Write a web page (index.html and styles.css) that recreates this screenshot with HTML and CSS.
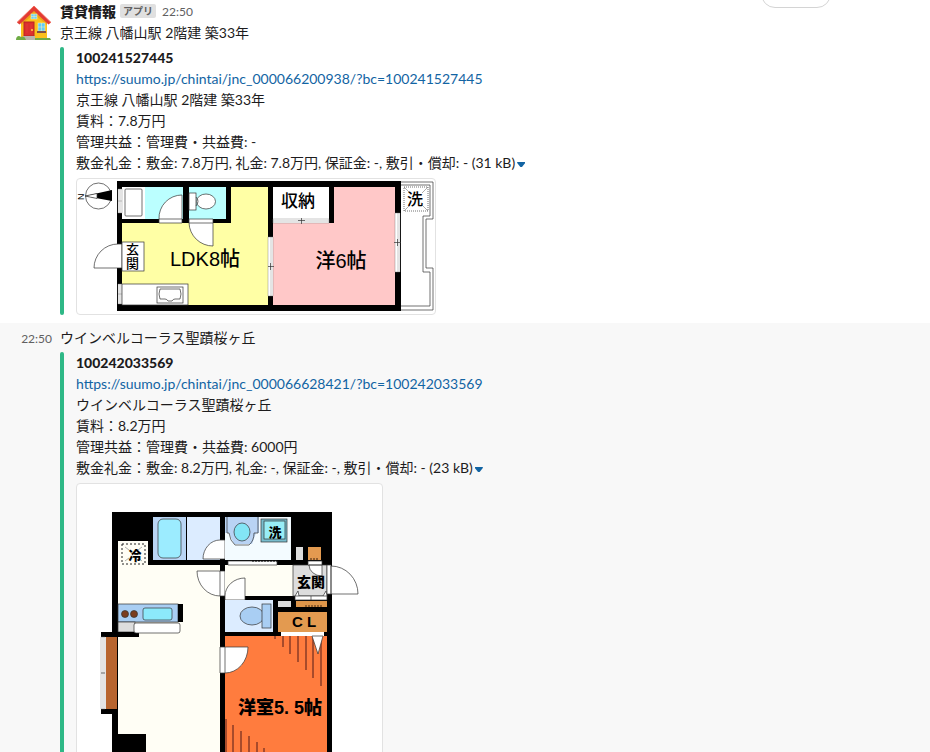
FILE: index.html
```html
<!DOCTYPE html>
<html lang="ja">
<head>
<meta charset="utf-8">
<title>賃貸情報</title>
<link rel="stylesheet" href="styles.css">
</head>
<body>
<main class="pane">
  <div class="date-pill"></div>

  <article class="message">
    <div class="gutter">
      <svg class="avatar" viewBox="0 0 36 36" aria-hidden="true">
        <path d="M5 17 18 5 31 17V34H5z" fill="#fbc01b"/>
        <path d="M5 17 18 5 31 17V20L18 9 5 20z" fill="#eda31a"/>
        <path d="M1 17.500 18 1 35 17.500 32.500 19.500 18 6 3.500 19.500z" fill="#e23b35"/>
        <path d="M1 17.500 18 1 35 17.500" fill="none" stroke="#f36a5b"/>
        <rect x="15" y="9" width="6" height="5" fill="#6fd0f5" stroke="#fff1b8" stroke-width=".5"/>
        <path d="M18 9v5M15 11.500h6" stroke="#fff1b8" stroke-width=".5"/>
        <rect x="8" y="17" width="10" height="14" fill="#dc2f2f" stroke="#b92525"/>
        <path d="M11 19v9M15 19v9" stroke="#e33c34"/><circle cx="16" cy="25" r="1" fill="#ffd54f"/>
        <rect x="22" y="18" width="7" height="8" fill="#62cdf6" stroke="#fff1b8" stroke-width=".5"/>
        <path d="M25.500 18v8M22 22h7" stroke="#fff1b8" stroke-width=".5"/>
        <rect x="21" y="26" width="9" height="2" fill="#805044"/>
        <rect x="7" y="31" width="12" height="4" fill="#b8b5ad"/>
        <path d="M0 35c0-4 3-5 5-3 3-1 4 0 5 3zM19 35v-2h15l1 2z" fill="#6fac45"/>
      </svg>
    </div>
    <div class="body">
      <header class="head"><strong>賃貸情報</strong><span class="badge">アプリ</span><time>22:50</time></header>
      <p>京王線 八幡山駅 2階建 築33年</p>
      <section class="attachment">
        <h3>100241527445</h3>
        <p><a href="https://suumo.jp/chintai/jnc_000066200938/?bc=100241527445">https://suumo.jp/chintai/jnc_000066200938/?bc=100241527445</a></p>
        <p>京王線 八幡山駅 2階建 築33年</p>
        <p>賃料：7.8万円</p>
        <p>管理共益：管理費・共益費: -</p>
        <p>敷金礼金：敷金: 7.8万円, 礼金: 7.8万円, 保証金: -, 敷引・償却: - (31 kB)<button class="toggle" type="button" aria-label="画像を隠す"></button></p>
        <svg class="plan plan-wide" viewBox="77 179 358 135" role="img" aria-label="間取り図 LDK8帖 洋6帖">
          <path d="M400 182H433V219H426V268H433V310H400M400 185H430V216H423V272H430V306H400" class="thin hollow"/>
          <rect x="117" y="181" width="284" height="130"/>
          <rect x="122" y="187" width="146" height="118" fill="#ffffa5"/>
          <rect x="273" y="187" width="122" height="118" fill="#ffc8c8"/>
          <path d="M122 187H231V223H122z"/>
          <rect x="122" y="187" width="23" height="32" fill="#fff"/>
          <rect x="145" y="187" width="38" height="32" fill="#bff"/>
          <rect x="189" y="187" width="37" height="32" fill="#bff"/>
          <rect x="125" y="189" width="17" height="27" rx="1" class="thin white"/>
          <path d="M159 219A23 23 0 0 1 182 195V223H159zM159 219h23" class="thin white"/>
          <path d="M189 219H213V246A24 24 0 0 1 189 223zM189 223h24" class="thin white"/>
          <rect x="189" y="193" width="7" height="17" class="thin white"/>
          <ellipse cx="206" cy="201.500" rx="9.500" ry="7.500" class="thin white"/>
          <path d="M196 197q4 4 0 9" class="thin hollow"/>
          <path d="M273 187H334V223H273z"/>
          <rect x="273" y="187" width="56" height="32" fill="#fff"/>
          <path d="M273 219H329V223H273zM273 221h56" class="pane-line white"/>
          <path d="M118 189h4v24h-4zM118 201h4M118 284h4v20h-4zM118 294h4M120 189v24M120 284v20" class="pane-line white"/>
          <path d="M122 244H118A24 24 0 0 0 94 268H122z" class="thin white"/>
          <rect x="122" y="242" width="22" height="29" class="thin white"/>
          <rect x="122" y="284" width="66" height="21" class="thin white"/>
          <rect x="157" y="287" width="26" height="16" class="thin white"/>
          <path d="M160 289h20q2 5 0 10h-5q-2 0-3 2h-4q-1-2-3-2h-5q-2-5 0-10z" class="thin white"/>
          <path d="M268 237h5v59h-5zM271 237v59M395 213h5v59h-5zM398 213v59" class="pane-line white"/>
          <path d="M268 266.500h6M270.500 263v7M394 242.500h7M397.500 239v7M298 220.500h7M301.500 218v6" class="thin"/>
          <circle cx="98.500" cy="196" r="13" class="thin white"/>
          <path d="M85 196 112 190V201z"/><path d="M85 196 97 193.500V198.500z" fill="#fff" class="thin"/>
          <text x="84" y="200" font-size="9" transform="rotate(-90 84 200)" class="latin">N</text>
          <path d="M404 187h24v24h-24z" class="thin hollow dotted"/>
          <path d="M404 187 410 193M428 187 422 193M404 211l6-6M428 211l-6-6" class="hair"/>
          <g class="label"><text font-size="13"><tspan x="132.500" y="254">玄</tspan><tspan x="132.500" y="268">関</tspan></text>
          <text x="205" y="266" font-size="20">LDK8帖</text><text x="341" y="268" font-size="20">洋6帖</text>
          <text x="298" y="207" font-size="17">収納</text><text x="415" y="205" font-size="16">洗</text></g>
        </svg>
      </section>
    </div>
  </article>

  <article class="message hovered">
    <div class="gutter"><time>22:50</time></div>
    <div class="body">
      <p>ウインベルコーラス聖蹟桜ヶ丘</p>
      <section class="attachment">
        <h3>100242033569</h3>
        <p><a href="https://suumo.jp/chintai/jnc_000066628421/?bc=100242033569">https://suumo.jp/chintai/jnc_000066628421/?bc=100242033569</a></p>
        <p>ウインベルコーラス聖蹟桜ヶ丘</p>
        <p>賃料：8.2万円</p>
        <p>管理共益：管理費・共益費: 6000円</p>
        <p>敷金礼金：敷金: 8.2万円, 礼金: -, 保証金: -, 敷引・償却: - (23 kB)<button class="toggle" type="button" aria-label="画像を隠す"></button></p>
        <svg class="plan plan-tall" viewBox="77 484 305 356" role="img" aria-label="間取り図 洋室5.5帖">
          <rect x="112" y="512" width="220" height="300"/>
          <rect x="118" y="565" width="102" height="240" fill="#fffef5"/>
          <rect x="118" y="541" width="30" height="26" fill="#fffef5"/>
          <rect x="122" y="544" width="23" height="20" class="hollow dash"/>
          <path d="M125 547l4 3M142 547l-4 3M125 561l4-3M142 561l-4-3" class="hair"/>
          <rect x="153" y="517" width="33" height="43" fill="#b9d5f4"/>
          <rect x="187" y="517" width="33" height="43" fill="#dcecff"/>
          <rect x="158" y="519" width="23" height="39" rx="5" fill="#9cecff" class="thin"/>
          <path d="M220 540A17 19 0 0 0 203 559H225V540z" class="thin white"/>
          <path d="M197 571H225V596H220A23 25 0 0 1 197 571zM220 571v25" class="thin white"/>
          <rect x="118" y="604" width="60" height="18" fill="#a9cef3" class="thin"/>
          <rect x="178" y="604" width="5" height="18"/>
          <circle cx="125" cy="614" r="3.500" fill="#7b3c1d" class="thin"/><circle cx="134" cy="614" r="3.500" fill="#7b3c1d" class="thin"/>
          <rect x="143" y="608" width="29" height="12" rx="2" fill="#8ce9fb" class="thin"/>
          <rect x="118" y="622" width="17" height="10" fill="#ddd" class="thin"/>
          <path d="M101 632h38v5h-38zM101 709h17v5h-17z"/>
          <rect x="134" y="623" width="46" height="10" rx="2" class="thin white"/>
          <rect x="106" y="637" width="11" height="72" fill="#b8652f"/>
          <path d="M112 637V709" stroke="#b8652f" stroke-width="2"/>
          <path d="M101 637h4v72h-4zM103 637v72" class="pane-line white"/><path d="M101 673h4" class="thin"/>
          <path d="M112 734h34v70h-34z"/><path d="M84 715h28v100H84z" fill="#fff"/>
          <rect x="225" y="517" width="66" height="43" fill="#f3fbff"/>
          <path d="M225 517h34v16h-3l-4 11h-18l-5-11h-4z" fill="#b9d3f4"/>
          <path d="M227 517v16h2q1 8 6 12h14q5-4 5-12h4v-16" class="thin hollow"/>
          <ellipse cx="242" cy="532" rx="8" ry="9" fill="#83e5f6" class="thin"/>
          <rect x="261" y="519" width="26" height="23" fill="#78bdce" class="thin"/><rect x="264" y="521" width="21" height="18" fill="#98edf6" class="thin"/>
          <rect x="296" y="547" width="7" height="13" fill="#ddd"/><rect x="308" y="547" width="13" height="13" fill="#e39a50"/>
          <path d="M310 559h8" stroke="#3b1e08" stroke-dasharray="2 1"/>
          <rect x="225" y="565" width="68" height="31" fill="#fffef5"/>
          <path d="M228 561h49v4h-49z" class="thin white"/><path d="M252 561h25" stroke="#000" stroke-dasharray="2 1"/>
          <rect x="293" y="565" width="34" height="31" fill="#ddd" class="thin"/>
          <path d="M308 561h14v4h-14zM309 565A13 11 0 0 0 322 576V565zM327 565h4v29h-4zM331 566A27 28 0 0 1 358 594H331z" class="thin white"/>
          <path d="M225 600V596A20 18 0 0 1 245 578V600z" class="thin white"/>
          <path d="M295 596h32v4h-32zM311 596v4M295 596l3-5 1 5M323 596l3-5 1 5" class="thin white"/>
          <rect x="296" y="601" width="31" height="6" fill="#dd954a"/><path d="M305 606h17" stroke="#4b2b10" stroke-dasharray="2 1"/>
          <rect x="278" y="601" width="13" height="6" fill="#ddd"/>
          <rect x="225" y="600" width="48" height="32" fill="#dcecff"/>
          <ellipse cx="252" cy="616" rx="12" ry="9" fill="#a9cef3" class="thin"/><rect x="262" y="604" width="9" height="24" fill="#a9cef3" class="thin"/>
          <rect x="278" y="612" width="49" height="20" fill="#e39a50"/>
          <rect x="225" y="636" width="102" height="170" fill="#ff7c3e"/>
          <rect x="281" y="632" width="43" height="4" fill="#fff"/>
          <path d="M220 647H248A23 26 0 0 1 225 673H220zM225 647v26" class="thin white"/>
          <path d="M275 636v3M283 636v11M290 636v18M298 636v26M306 636v34M313 636v42M321 636v50M226 719v80M233 725v74M241 731v68M249 736v63M257 742v57M264 748v51" stroke="#501b19"/>
          <path d="M312 636h11l-5 18z" class="thin white"/>
          <g class="label heavy"><text x="135" y="560" font-size="13">冷</text><text x="275" y="537" font-size="13">洗</text>
          <text x="311" y="587" font-size="14">玄関</text><text x="304" y="627" font-size="15" xml:space="preserve">C L</text>
          <text x="280" y="714" font-size="18">洋室5. 5帖</text></g>
        </svg>
      </section>
    </div>
  </article>
</main>
</body>
</html>
```
FILE: styles.css
```css
* { box-sizing: border-box; }

body {
  margin: 0;
  background: #fff;
  color: #1d1c1d;
  font: 14px/21px Lato, "Noto Sans CJK JP", sans-serif;
}

.pane {
  position: relative;
  height: 100vh;
  overflow: hidden;
}

.date-pill {
  position: absolute;
  top: -20px;
  right: 99px;
  width: 70px;
  height: 28px;
  border: 1px solid #d4d4d4;
  border-radius: 14px;
  background: #fff;
}

.message {
  display: flex;
  gap: 8px;
  padding-bottom: 8px;
}

.hovered {
  padding-top: 4px;
  background: #f8f8f8;
}

.gutter {
  flex: 0 0 52px;
  text-align: right;
}

.avatar {
  display: block;
  width: 36px;
  height: 36px;
  margin: 5px 0 0 16px;
}

.body { flex: 1; min-width: 0; }

.head {
  display: flex;
  align-items: center;
  height: 22px;
}

.head strong { font-weight: 900; }

.badge {
  margin: 0 6px 0 4px;
  padding: 0 3px;
  border-radius: 2px;
  background: #e0e0e0;
  color: #616061;
  font-size: 10px;
  font-weight: 700;
  line-height: 14px;
}

time { color: #616061; font-size: 12px; }

p, h3 { margin: 0; font-size: 14px; }

h3 { font-weight: 900; }

a { color: #1264a3; text-decoration: none; }

.attachment {
  position: relative;
  margin-top: 4px;
  padding-left: 16px;
}

.attachment::before {
  content: "";
  position: absolute;
  top: 0;
  bottom: 0;
  left: 0;
  width: 4px;
  border-radius: 4px;
  background: #2eb886;
}

.toggle {
  width: 8px;
  height: 5px;
  margin-left: 2px;
  padding: 0;
  border: 0;
  background: #1264a3;
  clip-path: polygon(0 0, 100% 0, 100% 20%, 60% 100%, 40% 100%, 0 20%);
  vertical-align: middle;
}

.plan {
  display: block;
  margin-top: 5px;
  border: 1px solid #e2e2e2;
  border-radius: 4px;
  background: #fff;
  max-width: 100%;
}

.plan-wide { width: 360px; }
.plan-tall { width: 307px; }

.thin { stroke: #333; stroke-width: 0.7; }
.hair { stroke: #777; stroke-width: 0.6; }
.pane-line { stroke: #777; stroke-width: 0.4; }
.white { fill: #fff; }
.hollow { fill: none; }
.dotted { stroke-dasharray: 1 1; }
.dash { stroke: #222; stroke-dasharray: 2 2; }

.latin { font-family: "Liberation Sans", sans-serif; }

.label {
  font-family: "Liberation Sans", "Noto Sans CJK JP", sans-serif;
  text-anchor: middle;
  font-weight: 500;
}

.heavy { font-weight: 900; }
```
